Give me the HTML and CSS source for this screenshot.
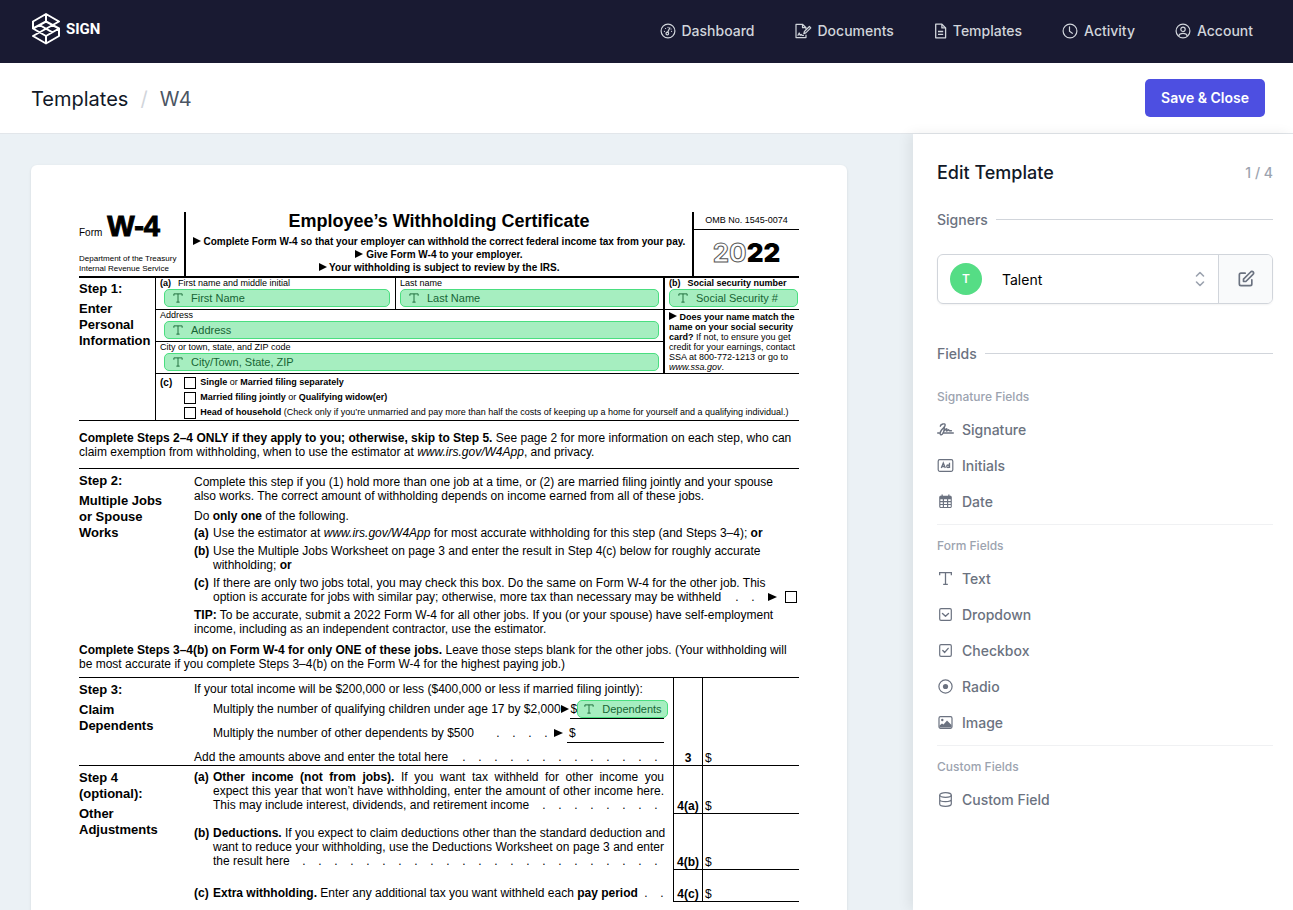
FILE: index.html
```html
<!DOCTYPE html>
<html lang="en">
<head>
<meta charset="utf-8">
<title>W4 - Edit Template</title>
<link rel="stylesheet" href="styles.css">
</head>
<body>
<svg class="sprite" aria-hidden="true">
  <symbol id="i-text" viewBox="0 0 16 16"><path d="M2.5 5V2.5h11V5M8 2.5v11M5.8 13.5h4.4" fill="none" stroke="currentColor" stroke-width="1.200"/></symbol>
</svg>
<div class="app">
  <header class="topbar">
    <a class="logo" href="#">
      <svg width="28" height="32" viewBox="0 0 28 32" fill="none" stroke="#fff" stroke-width="2" stroke-linejoin="round"><path d="M1 15.500V8.500L14 1l13 7.500L1 23l13 7.500L27 23v-7.500L14 8.500 1 15.500 14 23 27 15.500M14 1v7.500M14 23v7.500M7.500 12l13 7.300"/></svg>
      <span>SIGN</span>
    </a>
    <nav class="nav">
      <a href="#"><svg width="16" height="16" viewBox="0 0 16 16" fill="none" stroke="currentColor" stroke-width="1.2" stroke-linecap="round"><circle cx="8" cy="8" r="6.900"/><circle cx="7.300" cy="10.500" r="1.300"/><path d="M7.700 9.300 9.800 4.800M4.400 8.300h.1M5.500 5.500h.1M8 4.300h.1M11.500 8.300h.1M11 6h.1"/></svg>Dashboard</a>
      <a href="#"><svg width="17" height="16" viewBox="0 0 17 16" fill="none" stroke="currentColor" stroke-width="1.200" stroke-linejoin="round" stroke-linecap="round"><path d="M11 12v2.600H1V1.300h6.500L11 4.700V6M7.500 1.300v3.400H11"/><path d="M8.800 10.600 9.400 8.500l5-5 1.400 1.400-5 5zM3 12.300l1.200-2.300 1 2.300 1-1 .8 1h1.500"/></svg>Documents</a>
      <a href="#"><svg width="13" height="16" viewBox="0 0 13 16" fill="none" stroke="currentColor" stroke-width="1.300" stroke-linejoin="round"><path d="M1.700 1.200h6.200l3.700 3.700v9.900H1.700z"/><path d="M7.900 1.200v3.700h3.700M4 8.500h5.200M4 11.300h5.200"/></svg>Templates</a>
      <a href="#"><svg width="16" height="16" viewBox="0 0 16 16" fill="none" stroke="currentColor" stroke-width="1.200" stroke-linecap="round"><circle cx="8" cy="8" r="6.900"/><path d="M7.500 3.800v4.500l2.800 2"/></svg>Activity</a>
      <a href="#"><svg width="16" height="16" viewBox="0 0 16 16" fill="none" stroke="currentColor" stroke-width="1.200"><circle cx="8" cy="8" r="6.900"/><circle cx="8" cy="6.300" r="2.200"/><path d="M3.600 13c.6-2 2-2.700 4.400-2.700s3.800.7 4.400 2.700"/></svg>Account</a>
    </nav>
  </header>
  <div class="titlebar">
    <div class="crumbs"><a href="#">Templates</a><span class="slash">/</span><span class="current">W4</span></div>
    <button class="save">Save &amp; Close</button>
  </div>
  <div class="workspace">
    <main class="canvas">
      <article class="paper">
        <section class="form-head">
          <div class="form-id">
            <div class="form-name"><span>Form</span><b>W-4</b></div>
            <div class="dept">Department of the Treasury<br>Internal Revenue Service</div>
          </div>
          <div class="form-title">
            <h1>Employee’s Withholding Certificate</h1>
            <p><i class="tri"></i> Complete Form W-4 so that your employer can withhold the correct federal income tax from your pay.</p>
            <p><i class="tri"></i> Give Form W-4 to your employer.</p>
            <p><i class="tri"></i> Your withholding is subject to review by the IRS.</p>
          </div>
          <div class="form-year">
            <div class="omb">OMB No. 1545-0074</div>
            <div class="year"><span>20</span>22</div>
          </div>
        </section>

        <section class="step1">
          <div class="step-label"><p>Step 1:</p><p>Enter<br>Personal<br>Information</p></div>
          <div class="boxes">
            <div class="cell first"><div class="cap"><b>(a)</b>First name and middle initial</div>
              <button class="placed"><svg><use href="#i-text"/></svg>First Name</button></div>
            <div class="cell last"><div class="cap">Last name</div>
              <button class="placed"><svg><use href="#i-text"/></svg>Last Name</button></div>
            <div class="cell ssn"><div class="cap"><b>(b)</b><b>Social security number</b></div>
              <button class="placed"><svg><use href="#i-text"/></svg>Social Security #</button></div>
            <div class="cell wide"><div class="cap">Address</div>
              <button class="placed"><svg><use href="#i-text"/></svg>Address</button></div>
            <div class="cell wide"><div class="cap">City or town, state, and ZIP code</div>
              <button class="placed"><svg><use href="#i-text"/></svg>City/Town, State, ZIP</button></div>
            <div class="cell match"><i class="tri"></i> <b>Does your name match the<br>name on your social security<br>card?</b> If not, to ensure you get<br>credit for your earnings, contact<br>SSA at 800-772-1213 or go to<br><em>www.ssa.gov</em>.</div>
            <div class="status">
              <b class="status-key">(c)</b>
              <div>
                <label><input type="checkbox" class="tick"><span><b>Single</b> or <b>Married filing separately</b></span></label>
                <label><input type="checkbox" class="tick"><span><b>Married filing jointly</b> or <b>Qualifying widow(er)</b></span></label>
                <label><input type="checkbox" class="tick"><span><b>Head of household</b> (Check only if you’re unmarried and pay more than half the costs of keeping up a home for yourself and a qualifying individual.)</span></label>
              </div>
            </div>
          </div>
        </section>

        <p class="note note-top"><b>Complete Steps 2–4 ONLY if they apply to you; otherwise, skip to Step 5.</b> See page 2 for more information on each step, who can<br>claim exemption from withholding, when to use the estimator at <em>www.irs.gov/W4App</em>, and privacy.</p>

        <section class="step">
          <div class="step-label"><p>Step 2:</p><p>Multiple Jobs<br>or Spouse<br>Works</p></div>
          <div class="step-body">
            <p>Complete this step if you (1) hold more than one job at a time, or (2) are married filing jointly and your spouse<br>also works. The correct amount of withholding depends on income earned from all of these jobs.</p>
            <p class="do">Do <b>only one</b> of the following.</p>
            <div class="item item-a"><b>(a)</b><p>Use the estimator at <em>www.irs.gov/W4App</em> for most accurate withholding for this step (and Steps 3–4); <b>or</b></p></div>
            <div class="item"><b>(b)</b><p>Use the Multiple Jobs Worksheet on page 3 and enter the result in Step 4(c) below for roughly accurate<br>withholding; <b>or</b></p></div>
            <div class="item"><b>(c)</b><div><p>If there are only two jobs total, you may check this box. Do the same on Form W-4 for the other job. This</p>
              <label class="lead two-jobs"><span>option is accurate for jobs with similar pay; otherwise, more tax than necessary may be withheld</span><span class="dots"><i>.</i><i>.</i></span><i class="tri big"></i><input type="checkbox" class="tick"></label></div></div>
            <p class="tip"><b>TIP:</b> To be accurate, submit a 2022 Form W-4 for all other jobs. If you (or your spouse) have self-employment<br>income, including as an independent contractor, use the estimator.</p>
          </div>
        </section>

        <p class="note note-mid"><b>Complete Steps 3–4(b) on Form W-4 for only ONE of these jobs.</b> Leave those steps blank for the other jobs. (Your withholding will<br>be most accurate if you complete Steps 3–4(b) on the Form W-4 for the highest paying job.)</p>

        <section class="step money">
          <div class="step-label"><p>Step 3:</p><p>Claim<br>Dependents</p></div>
          <div class="rows">
            <div class="row">
              <div class="row-text claim">
                <p>If your total income will be $200,000 or less ($400,000 or less if married filing jointly):</p>
                <div class="lead sub children"><span>Multiply the number of qualifying children under age 17 by $2,000</span><i class="tri"></i><span class="amount">$<button class="placed"><svg><use href="#i-text"/></svg>Dependents</button></span></div>
                <div class="lead sub others"><span>Multiply the number of other dependents by $500</span><span class="dots"><i>.</i><i>.</i><i>.</i><i>.</i></span><i class="tri big"></i><span class="amount">$</span></div>
                <div class="lead total"><span>Add the amounts above and enter the total here</span><span class="dots"><i>.</i><i>.</i><i>.</i><i>.</i><i>.</i><i>.</i><i>.</i><i>.</i><i>.</i><i>.</i><i>.</i><i>.</i><i>.</i></span></div>
              </div>
              <b class="num">3</b><span class="cash">$</span>
            </div>
          </div>
        </section>

        <section class="step money">
          <div class="step-label"><p>Step 4<br>(optional):</p><p>Other<br>Adjustments</p></div>
          <div class="rows">
            <div class="row">
              <div class="row-text item"><b>(a)</b><div>
                <p class="full"><b>Other income (not from jobs).</b> If you want tax withheld for other income you</p>
                <p class="full">expect this year that won’t have withholding, enter the amount of other income here.</p>
                <div class="lead"><span>This may include interest, dividends, and retirement income</span><span class="dots"><i>.</i><i>.</i><i>.</i><i>.</i><i>.</i><i>.</i><i>.</i><i>.</i></span></div></div></div>
              <b class="num">4(a)</b><span class="cash">$</span>
            </div>
            <div class="row row-later">
              <div class="row-text item"><b>(b)</b><div>
                <p class="full"><b>Deductions.</b> If you expect to claim deductions other than the standard deduction and</p>
                <p class="full">want to reduce your withholding, use the Deductions Worksheet on page 3 and enter</p>
                <div class="lead"><span>the result here</span><span class="dots"><i>.</i><i>.</i><i>.</i><i>.</i><i>.</i><i>.</i><i>.</i><i>.</i><i>.</i><i>.</i><i>.</i><i>.</i><i>.</i><i>.</i><i>.</i><i>.</i><i>.</i><i>.</i><i>.</i><i>.</i><i>.</i><i>.</i><i>.</i></span></div></div></div>
              <b class="num">4(b)</b><span class="cash">$</span>
            </div>
            <div class="row row-extra">
              <div class="row-text item"><b>(c)</b><div>
                <div class="lead"><span><b>Extra withholding.</b> Enter any additional tax you want withheld each <b>pay period</b></span><span class="dots"><i>.</i><i>.</i></span></div></div></div>
              <b class="num">4(c)</b><span class="cash">$</span>
            </div>
          </div>
        </section>
      </article>
    </main>

    <aside class="panel">
      <div class="panel-head"><h2>Edit Template</h2><span>1 / 4</span></div>
      <h3 class="rule"><label for="signer">Signers</label></h3>
      <div class="signer">
        <span class="avatar">T</span>
        <select id="signer"><option>Talent</option></select>
        <svg class="chev" width="10" height="16" viewBox="0 0 10 16" fill="none" stroke="#9ca3af" stroke-width="1.600" stroke-linecap="round" stroke-linejoin="round"><path d="M1.500 5 5 1.500 8.500 5M1.500 11 5 14.500 8.500 11"/></svg>
        <button class="edit" aria-label="Edit signer"><svg width="20" height="20" viewBox="0 0 24 24" fill="none" stroke="currentColor" stroke-width="2" stroke-linecap="round" stroke-linejoin="round"><path d="M11 5H6a2 2 0 0 0-2 2v11a2 2 0 0 0 2 2h11a2 2 0 0 0 2-2v-5m-1.400-9.400a2 2 0 1 1 2.800 2.800L11.800 15H9v-2.800z"/></svg></button>
      </div>
      <h3 class="rule">Fields</h3>
      <div class="group">
        <h4>Signature Fields</h4>
        <button class="field"><svg width="17" height="17" viewBox="0 0 17 17" fill="none" stroke="currentColor" stroke-width="1.400" stroke-linecap="round" stroke-linejoin="round"><path d="M.7 12h1.500M5.800 12h10.500M3.300 5.200C3.600 3 8 1.800 8.200 4c.1 1.900-2.600 3.300-4 5.500-1.400 2.300-1.500 4.300.2 4.200C6.800 13.500 7.200 9 7.500 5.500M7 10c1.300-1.800 2.500-2.600 2.800-2.200.4.500-.9 2-.2 2.200.7.100 1.400-1.500 2.200-1.200.5.200 0 1 .8 1h1.800"/></svg>Signature</button>
        <button class="field"><svg width="17" height="17" viewBox="0 0 17 17" fill="none" stroke="currentColor" stroke-width="1.200"><rect x="1.200" y="2.700" width="14.600" height="11.600" rx="1.500"/><path d="M4.300 11 6.300 6l2 5M5 9.500h2.700M12.500 5.800V11" stroke-width="1.300"/><circle cx="11" cy="9.300" r="1.300" stroke-width="1.300"/></svg>Initials</button>
        <button class="field"><svg width="17" height="17" viewBox="0 0 17 17"><path fill="currentColor" fill-rule="evenodd" d="M4.500 1.500h1.300v1.300h5.400V1.500h1.300v1.300h.8c.9 0 1.500.6 1.500 1.500v9.200c0 .9-.6 1.500-1.500 1.500H3.700c-.9 0-1.500-.6-1.500-1.500V4.300c0-.9.6-1.500 1.500-1.500h.8zM3.400 6.300v1.800h2.400V6.300zm3.600 0v1.800h3V6.300zm4.200 0v1.800h2.500V6.300zM3.400 9.200v1.800h2.400V9.200zm3.600 0v1.800h3V9.200zm4.200 0v1.800h2.500V9.200zM3.400 12.100v1.800h2.400v-1.800zm3.600 0v1.800h3v-1.800zm4.200 0v1.800h2.500v-1.800z"/></svg>Date</button>
      </div>
      <div class="group">
        <h4>Form Fields</h4>
        <button class="field"><svg width="17" height="17"><use href="#i-text"/></svg>Text</button>
        <button class="field"><svg width="17" height="17" viewBox="0 0 17 17" fill="none" stroke="currentColor" stroke-width="1.200" stroke-linecap="round" stroke-linejoin="round"><rect x="2.700" y="2.700" width="11.600" height="11.600" rx="1.300"/><path d="m5.500 7.500 3 2.700 3-2.700" stroke-width="1.400"/></svg>Dropdown</button>
        <button class="field"><svg width="17" height="17" viewBox="0 0 17 17" fill="none" stroke="currentColor" stroke-width="1.200" stroke-linecap="round" stroke-linejoin="round"><rect x="2.700" y="2.700" width="11.600" height="11.600" rx="1.300"/><path d="m5.800 8.500 1.900 1.900 3.500-4" stroke-width="1.400"/></svg>Checkbox</button>
        <button class="field"><svg width="17" height="17" viewBox="0 0 17 17" fill="none" stroke="currentColor" stroke-width="1.200"><circle cx="8.500" cy="8.500" r="6.600"/><circle cx="8.500" cy="8.500" r="2.600" fill="currentColor" stroke="none"/></svg>Radio</button>
        <button class="field"><svg width="17" height="17" viewBox="0 0 17 17"><rect x="2" y="2.700" width="13" height="11.600" rx="1.500" fill="none" stroke="currentColor" stroke-width="1.200"/><circle cx="5.300" cy="6" r="1.200" fill="currentColor"/><path d="M2.500 13.500v-2l2.500-2 1.500 1 3.500-4 4.500 4.500v2.500z" fill="currentColor"/></svg>Image</button>
      </div>
      <div class="group">
        <h4>Custom Fields</h4>
        <button class="field"><svg width="17" height="17" viewBox="0 0 17 17" fill="none" stroke="currentColor" stroke-width="1.200"><ellipse cx="8.500" cy="4" rx="5.800" ry="2.300"/><path d="M2.700 4v9c0 1.300 2.500 2.300 5.800 2.300s5.800-1 5.800-2.300V4M2.700 8.500c0 1.300 2.500 2.200 5.800 2.200s5.800-.9 5.800-2.200"/></svg>Custom Field</button>
      </div>
    </aside>
  </div>
</div>
</body>
</html>
```
FILE: styles.css
```css
* { box-sizing: border-box; }
body { margin: 0; font-family: Inter, sans-serif; font-size: 14px; color: #111827; }
h1, h2, h3, h4, p { margin: 0; }
a { color: inherit; text-decoration: none; }
button, select { font: inherit; color: inherit; border: 0; background: none; padding: 0; cursor: pointer; }
.sprite { display: none; }

.app { height: 100vh; display: flex; flex-direction: column; overflow: hidden; }

/* Top navigation */
.topbar { height: 63px; flex: none; display: flex; align-items: center; justify-content: space-between; padding: 0 40px 2px 32px; background: #191a32; color: #d1d5db; }
.logo { display: flex; align-items: center; gap: 6px; padding-bottom: 3px; color: #fff; font: bold 15px Roboto, sans-serif; }
.nav { display: flex; gap: 40px; font-weight: 500; }
.nav a { display: flex; align-items: center; gap: 6px; }

/* Title bar */
.titlebar { height: 71px; flex: none; display: flex; align-items: center; justify-content: space-between; padding: 0 28px 0 31px; background: #fff; border-bottom: 1px solid #e2e6ea; }
.crumbs { display: flex; gap: 12px; padding-top: 1px; font-size: 20px; }
.slash { color: #d1d5db; }
.current { color: #4b5563; }
.save { height: 38px; padding: 0 16px 1px; border-radius: 5px; background: #4d4fe1; color: #fff; font-weight: 600; }

.workspace { flex: 1; min-height: 0; display: flex; }
.canvas { flex: 1; min-width: 0; overflow: hidden; padding: 31px 66px 0 31px; background: #ebf1f5; }

/* Document page */
.paper { min-height: 1056px; max-width: 900px; padding: 47px 48px; background: #fff; border-radius: 6px; box-shadow: 0 1px 3px rgba(0, 0, 0, .1); color: #000; font: 12px/14px "Liberation Sans", Arial, sans-serif; white-space: nowrap; }
.tri { display: inline-block; flex: none; border-left: 8px solid #000; border-top: 4px solid transparent; border-bottom: 4px solid transparent; }
.tri.big { border-left-width: 9px; }
.tick { appearance: none; flex: none; width: 12px; height: 12px; margin: 0; border: 1px solid #000; background: #fff; }

.form-head { display: flex; height: 66px; border-bottom: 2px solid #000; }
.form-id { width: 105px; flex: none; display: flex; flex-direction: column; justify-content: space-between; }
.form-name { display: flex; align-items: baseline; gap: 5px; font-size: 10px; line-height: 28px; }
.form-name b { font-size: 29px; -webkit-text-stroke: 1px #000; }
.dept { font-size: 8px; line-height: 10px; padding-bottom: 2px; }
.form-title { flex: 1; min-width: 0; border-left: 2px solid #000; border-right: 2px solid #000; text-align: center; }
.form-title h1 { font-size: 18px; line-height: 18px; padding-bottom: 5px; }
.form-title p { font-size: 10px; line-height: 13px; font-weight: bold; }
.form-year { width: 105px; flex: none; }
.omb { height: 18px; line-height: 17px; border-bottom: 1px solid #000; font-size: 9px; text-align: center; }
.year { padding-top: 9px; text-align: center; font: 900 26px/28px Inter, sans-serif; }
.year span { color: #fff; font-weight: 700; -webkit-text-stroke: 1px #555; }

.step-label { width: 115px; flex: none; padding-top: 4px; font-size: 13px; line-height: 16px; font-weight: bold; }
.step-label p + p { margin-top: 4px; }

.step1 { display: flex; border-bottom: 1px solid #000; }
.step1 .step-label { width: 76px; padding-top: 3px; }
.boxes { flex: 1; min-width: 0; display: grid; grid-template-columns: 240px 1fr 136px; grid-template-rows: 32px 32px 32px 46px; border-left: 1px solid #000; }
.cell { border-bottom: 1px solid #000; padding: 0 4px; }
.cell .placed { width: calc(100% - 4px); margin-left: 4px; }
.cell.first { padding-right: 5px; border-right: 1px solid #000; }
.cell.last .placed { width: 100%; margin-left: 0; }
.cap { font-size: 9px; line-height: 11px; }
.cap b { margin-right: 7px; }
.wide { grid-column: 1 / 3; }
.ssn, .match { border-left: 2px solid #000; }
.ssn { padding-right: 1px; }
.ssn .placed { width: 100%; margin-left: 0; }
.match { grid-column: 3; grid-row: 2 / 4; padding-top: 2px; font-size: 9px; line-height: 10px; }
.status { grid-column: 1 / 4; display: flex; gap: 12px; padding: 1px 0 0 4px; font-size: 9px; line-height: 15px; }
.status-key { font-size: 10px; }
.status label { display: flex; align-items: center; gap: 4px; height: 15px; }

.placed { display: flex; align-items: center; gap: 7px; height: 18px; padding: 0 7px; border: 1px solid #4ade80; border-radius: 5px; background: #a6eec0; color: #166534; font: 11px "Liberation Sans", Arial, sans-serif; }
.placed svg { width: 12px; height: 12px; flex: none; }

.note { padding: 10px 0 9px; }
.note-top { border-bottom: 1px solid #000; }
.note-mid { padding: 7px 0 6px; }
.step { display: flex; }
.step-body { flex: 1; min-width: 0; padding-top: 6px; }
.do { margin-top: 6px; }
.item { display: flex; margin-top: 4px; }
.item > b { width: 19px; flex: none; }
.item > div { flex: 1; min-width: 0; }
.item-a { margin-top: 3px; }
.tip { margin-top: 4px; }
.lead { display: flex; align-items: center; justify-content: space-between; }
.dots { display: flex; margin-left: auto; }
.dots i { width: 16px; text-align: center; font-style: normal; }
.two-jobs { padding-right: 2px; }
.two-jobs .dots { margin-left: 0; }

.money { border-top: 1px solid #000; }
.rows { flex: 1; min-width: 0; }
.row { display: flex; align-items: stretch; }
.row-text { flex: 1; min-width: 0; margin: 0 9px 0 0; padding: 4px 0 1px; }
.row-text.item { padding-bottom: 2px; }
.row-later .row-text { padding-top: 12px; }
.row-extra .row-text { padding-top: 16px; }
.num, .cash { display: flex; align-items: flex-end; border-left: 1px solid #000; }
.num { width: 29px; justify-content: center; }
.cash { width: 97px; padding-left: 2px; }
.step:last-child .num, .step:last-child .cash { border-bottom: 1px solid #000; }
.full { text-align: justify; text-align-last: justify; }
.sub { padding-left: 19px; height: 20px; }
.children { margin-top: 3px; }
.others { margin-top: 4px; }
.total { margin-top: 7px; }
.amount { display: flex; align-items: center; width: 97px; height: 20px; padding-left: 2px; border-bottom: 1px solid #000; }
.sub .tri { margin-right: 4px; }
.children .tri { margin-right: 1px; }
.children .amount { flex: 1; min-width: 0; padding-left: 1px; }
.amount .placed { flex: none; width: 91px; padding: 0 5px; }

/* Side panel */
.panel { width: 380px; flex: none; padding: 23px 20px 0 24px; background: #fff; box-shadow: -4px 0 12px rgba(0, 0, 0, .07); color: #6b7280; font-weight: 500; overflow: hidden; }
.panel-head { display: flex; justify-content: space-between; align-items: center; height: 30px; color: #9ca3af; }
.panel-head h2 { font-size: 18px; font-weight: 500; color: #111827; }
.rule { display: flex; align-items: center; gap: 8px; margin-top: 22px; height: 20px; font-size: 14px; font-weight: 500; }
.rule::after { content: ""; flex: 1; border-top: 1px solid #d1d5db; }
.signer { display: flex; align-items: center; height: 50px; margin: 25px 0 39px; border: 1px solid #d1d5db; border-radius: 6px; box-shadow: 0 1px 2px rgba(0, 0, 0, .05); overflow: hidden; }
.signer + .rule { margin-top: 0; }
.avatar { width: 32px; height: 32px; margin-left: 12px; border-radius: 50%; background: #55dd85; color: #fff; font-size: 12px; font-weight: 600; line-height: 32px; text-align: center; }
.signer select { appearance: none; flex: 1; height: 100%; margin-left: 20px; font-weight: 400; color: #000; }
.chev { margin-right: 13px; }
.edit { display: grid; place-items: center; width: 54px; height: 100%; border-left: 1px solid #d1d5db; background: #f9fafb; color: #6b7280; }
.group { padding-bottom: 5px; border-bottom: 1px solid #f0f1f3; }
.rule + .group { margin-top: 24px; }
.group + .group { margin-top: 11px; }
.group:last-child { border: 0; }
.group h4 { height: 20px; line-height: 20px; margin-bottom: 4px; font-size: 12px; font-weight: 500; color: #9ca3af; }
.field { display: flex; align-items: center; gap: 8px; width: 100%; height: 36px; }
```
